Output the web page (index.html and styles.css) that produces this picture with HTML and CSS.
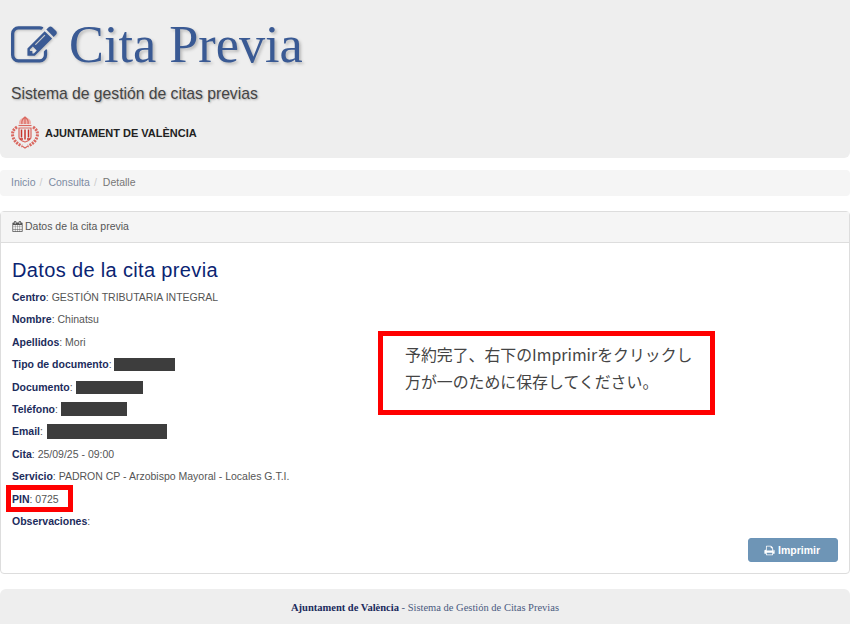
FILE: index.html
```html
<!DOCTYPE html>
<html lang="es">
<head>
    <meta charset="UTF-8">
    <meta name="viewport" content="width=device-width, initial-scale=1.0">
    <title>Cita Previa</title>
    <link rel="stylesheet" href="styles.css">
</head>
<body>
    <header class="site-header">
        <h1 class="site-title">
            <svg class="title-icon" viewBox="0 0 1792 1792" aria-hidden="true"><path d="M888 1184l116-116-152-152-116 116v56h96v96h56zm440-720q-16-16-33 1l-350 350q-17 17-1 33t33-1l350-350q17-17 1-33zm80 594v190q0 119-84.5 203.5t-203.5 84.5h-832q-119 0-203.5-84.5t-84.5-203.5v-832q0-119 84.5-203.5t203.5-84.5h832q63 0 117 25 15 7 18 23 3 17-9 29l-49 49q-14 14-32 8-23-6-45-6h-832q-66 0-113 47t-47 113v832q0 66 47 113t113 47h832q66 0 113-47t47-113v-126q0-13 9-22l64-64q15-15 35-7t20 29zm-96-738l288 288-672 672h-288v-288zm444 132l-92 92-288-288 92-92q28-28 68-28t68 28l152 152q28 28 28 68t-28 68z"/></svg>
            Cita Previa
        </h1>
        <p class="site-subtitle">Sistema de gestión de citas previas</p>
        <div class="site-brand">
            <!-- escudo simplificado -->
            <svg class="crest" viewBox="0 0 28 34" aria-hidden="true">
                <path class="crest-pale" d="M8 9q-1-5 6-7 7 2 6 7z"/>
                <path class="crest-line" d="M11 9q-1-4 3-7 4 3 3 7M14 2v7"/>
                <path class="crest-line" d="M7.500 10.500h13"/>
                <path class="crest-line" d="M8 13h12v9q0 3-6 5-6-2-6-5z"/>
                <path class="crest-dark" d="M10.500 14.500v8M14 14.500v10M17.500 14.500v8M9 24h3M16 24h3"/>
                <path class="crest-leaf" d="M6 12q-6 4-4 10t9 9M22 12q6 4 4 10t-9 9"/>
                <path class="crest-line" d="M11 31l3 2 3-2"/>
            </svg>
            <span class="brand-name">AJUNTAMENT DE VALÈNCIA</span>
        </div>
    </header>

    <nav class="breadcrumb">
        <a href="#">Inicio</a><span class="crumb-sep">/</span>
        <a href="#">Consulta</a><span class="crumb-sep">/</span>
        <span class="crumb-current">Detalle</span>
    </nav>

    <section class="panel">
        <div class="panel-heading">
            <svg class="fa-icon" viewBox="0 0 1664 1792" aria-hidden="true"><path d="M128 1664h288v-288h-288v288zm352 0h320v-288h-320v288zm-352-352h288v-320h-288v320zm352 0h320v-320h-320v320zm-352-384h288v-288h-288v288zm736 736h320v-288h-320v288zm-384-736h320v-288h-320v288zm768 736h288v-288h-288v288zm-384-352h320v-320h-320v320zm-352-864v-288q0-13-9.500-22.500t-22.500-9.500h-64q-13 0-22.500 9.500t-9.500 22.500v288q0 13 9.500 22.500t22.500 9.500h64q13 0 22.500-9.500t9.500-22.500zm736 864h288v-320h-288v320zm-384-384h320v-288h-320v288zm384 0h288v-288h-288v288zm32-480v-288q0-13-9.500-22.500t-22.500-9.500h-64q-13 0-22.500 9.500t-9.500 22.500v288q0 13 9.500 22.500t22.500 9.500h64q13 0 22.500-9.500t9.500-22.500zm384-64v1280q0 52-38 90t-90 38h-1408q-52 0-90-38t-38-90v-1280q0-52 38-90t90-38h128v-96q0-66 47-113t113-47h64q66 0 113 47t47 113v96h384v-96q0-66 47-113t113-47h64q66 0 113 47t47 113v96h128q52 0 90 38t38 90z"/></svg>
            Datos de la cita previa
        </div>
        <div class="panel-body">
            <h2 class="detail-title">Datos de la cita previa</h2>
            <p class="row"><strong>Centro</strong>: GESTIÓN TRIBUTARIA INTEGRAL</p>
            <p class="row"><strong>Nombre</strong>: Chinatsu</p>
            <p class="row"><strong>Apellidos</strong>: Mori</p>
            <p class="row"><strong>Tipo de documento</strong>: <span class="redact redact-tipo"></span></p>
            <p class="row"><strong>Documento</strong>: <span class="redact redact-doc"></span></p>
            <p class="row"><strong>Teléfono</strong>: <span class="redact redact-tel"></span></p>
            <p class="row"><strong>Email</strong>: <span class="redact redact-email"></span></p>
            <p class="row"><strong>Cita</strong>: 25/09/25 - 09:00</p>
            <p class="row"><strong>Servicio</strong>: PADRON CP - Arzobispo Mayoral - Locales G.T.I.</p>
            <p class="row"><span class="pin-wrap"><strong>PIN</strong>: 0725<span class="pin-mark"></span></span></p>
            <p class="row"><strong>Observaciones</strong>:</p>

            <div class="actions">
                <button class="btn-print" type="button">
                    <svg class="fa-icon" viewBox="0 0 1792 1792" aria-hidden="true"><path d="M448 1536h896v-256h-896v256zm0-640h896v-384h-160q-40 0-68-28t-28-68v-160h-640v640zm1152 64q0-26-19-45t-45-19-45 19-19 45 19 45 45 19 45-19 19-45zm128 0v416q0 13-9.500 22.500t-22.500 9.500h-224v160q0 40-28 68t-68 28h-960q-40 0-68-28t-28-68v-160h-224q-13 0-22.500-9.500t-9.500-22.500v-416q0-79 56.500-135.500t135.500-56.500h64v-544q0-40 28-68t68-28h672q40 0 88 20t76 48l152 152q28 28 48 76t20 88v256h64q79 0 135.500 56.500t56.500 135.500z"/></svg>
                    Imprimir
                </button>
            </div>

            <div class="callout">予約完了、右下のImprimirをクリックし<br>万が一のために保存してください。</div>
        </div>
    </section>

    <footer class="site-footer">
        <strong>Ajuntament de València</strong> - Sistema de Gestión de Citas Previas
    </footer>
</body>
</html>
```
FILE: styles.css
```css
/* base */
body {
    margin: 0;
    background-color: #fff;
    font-family: "Liberation Sans", Arial, sans-serif;
    font-size: 10.5px;
    color: #555;
}

/* cabecera */
.site-header {
    height: 158px;
    box-sizing: border-box;
    padding: 13px 11px 0;
    background-color: #eee;
    border-radius: 0 0 6px 6px;
}

.site-title {
    display: flex;
    align-items: center;
    gap: 12px;
    margin: 0;
    height: 62px;
    font-family: "Liberation Serif", "Times New Roman", serif;
    font-size: 52.3px;
    font-weight: 400;
    color: #3a5a94;
    text-shadow: 2px 2px 3px #bbb;
}

.title-icon {
    width: 46px;
    height: 46px;
    margin-top: 4px;
    fill: #3a5a94;
    filter: drop-shadow(1px 1px 1px #bbb);
}

.site-subtitle {
    margin: 9px 0 0;
    font-size: 15.7px;
    line-height: 20px;
    color: #444;
    text-shadow: 1px 1px 2px #aaa;
}

.site-brand {
    display: flex;
    align-items: center;
    gap: 6px;
    margin-top: 11px;
}

.crest {
    width: 28px;
    height: 34px;
}

.crest-pale {
    fill: #eeb4ae;
}

.crest-line {
    fill: none;
    stroke: #d9675f;
    stroke-width: 1.200;
}

.crest-dark {
    fill: none;
    stroke: #c7352c;
    stroke-width: 1.500;
}

.crest-leaf {
    fill: none;
    stroke: #d9675f;
    stroke-width: 3;
    stroke-dasharray: 2 1;
}

.brand-name {
    margin-top: 2px;
    font-size: 11px;
    font-weight: 700;
    color: #222;
}

/* migas */
.breadcrumb {
    display: flex;
    align-items: center;
    height: 26px;
    margin-top: 12px;
    padding: 0 11px 2px;
    box-sizing: border-box;
    background-color: #f5f5f5;
    border-radius: 4px;
    color: #777;
}

.breadcrumb a {
    color: #7d8ba3;
    text-decoration: none;
}

.crumb-sep {
    padding: 0 6px 0 4px;
    color: #ccc;
}

/* panel */
.panel {
    margin-top: 15px;
    height: 363px;
    box-sizing: border-box;
    background-color: #fff;
    border: 1px solid #ddd;
    border-radius: 4px;
}

.panel-heading {
    display: flex;
    align-items: center;
    gap: 2px;
    height: 31px;
    padding: 0 11px 2px;
    box-sizing: border-box;
    background-color: #f5f5f5;
    border-bottom: 1px solid #ddd;
    color: #555;
}

.fa-icon {
    width: 11px;
    height: 11px;
    fill: currentColor;
}

.panel-body {
    position: relative;
    padding: 15px 11px 0;
}

.detail-title {
    margin: 0 0 4px;
    font-size: 20px;
    font-weight: 400;
    line-height: 24px;
    letter-spacing: 0.35px;
    color: #0a2472;
}

.row {
    margin: 0;
    height: 22.400px;
    line-height: 22.400px;
}

.row strong {
    color: #1c2c5c;
}

.redact {
    display: inline-block;
    height: 13px;
    vertical-align: -3px;
    background-color: #3d3d3d;
}

.redact-tipo { width: 61px; }
.redact-doc { width: 67px; }
.redact-tel { width: 66px; height: 14px; }
.redact-email { width: 120px; height: 15px; margin-left: 1px; vertical-align: -4px; }

.pin-wrap {
    position: relative;
}

/* marcas rojas encima de la captura */
.pin-mark {
    position: absolute;
    left: -6px;
    top: -8px;
    width: 67px;
    height: 27px;
    box-sizing: border-box;
    border: 5px solid #f00;
}

.callout {
    position: absolute;
    left: 377px;
    top: 88px;
    width: 337px;
    height: 84px;
    box-sizing: border-box;
    padding: 5px 0 0 22px;
    border: 5px solid #f00;
    background-color: #fff;
    font-family: "Noto Sans CJK JP", "Liberation Sans", sans-serif;
    font-size: 15.900px;
    line-height: 27px;
    color: #444;
}

.actions {
    display: flex;
    justify-content: flex-end;
    margin-top: 6px;
}

.btn-print {
    display: flex;
    align-items: center;
    justify-content: center;
    gap: 3px;
    width: 90px;
    height: 24px;
    padding: 0 2px 0 0;
    border: 1px solid #6b94b8;
    border-radius: 3px;
    background-color: #6e95b6;
    color: #fff;
    font-family: inherit;
    font-size: 10.500px;
    font-weight: 700;
}

/* pie */
.site-footer {
    margin-top: 15px;
    height: 35px;
    box-sizing: border-box;
    padding-top: 13px;
    background-color: #eee;
    border-radius: 6px 6px 0 0;
    text-align: center;
    font-family: "Liberation Serif", "Times New Roman", serif;
    font-size: 10.500px;
    color: #4a5a80;
}

.site-footer strong {
    color: #1a2a5c;
}
```
